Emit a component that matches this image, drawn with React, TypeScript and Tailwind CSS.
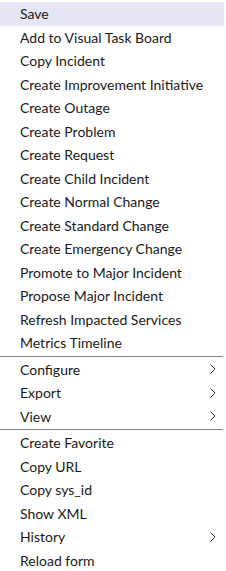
import React from "react";

type Item = { label: string; sub?: boolean };

const groups: Item[][] = [
  [
    { label: "Save" },
    { label: "Add to Visual Task Board" },
    { label: "Copy Incident" },
    { label: "Create Improvement Initiative" },
    { label: "Create Outage" },
    { label: "Create Problem" },
    { label: "Create Request" },
    { label: "Create Child Incident" },
    { label: "Create Normal Change" },
    { label: "Create Standard Change" },
    { label: "Create Emergency Change" },
    { label: "Promote to Major Incident" },
    { label: "Propose Major Incident" },
    { label: "Refresh Impacted Services" },
    { label: "Metrics Timeline" },
  ],
  [
    { label: "Configure", sub: true },
    { label: "Export", sub: true },
    { label: "View", sub: true },
  ],
  [
    { label: "Create Favorite" },
    { label: "Copy URL" },
    { label: "Copy sys_id" },
    { label: "Show XML" },
    { label: "History", sub: true },
    { label: "Reload form" },
  ],
];

const Chevron = () => (
  <svg width="8" height="12" viewBox="0 0 8 12" className="text-[#3a3a3a]">
    <path d="M1.5 1.5 L6 6 L1.5 10.5" fill="none" stroke="currentColor" strokeWidth="1" />
  </svg>
);

export default function App() {
  return (
    <div
      className="w-[226px] h-[571px] bg-white overflow-hidden pt-[2px] text-[14px] text-[#1a1a1a]"
      style={{ fontFamily: "Lato, 'Liberation Sans', sans-serif" }}
    >
      {groups.map((group, gi) => (
        <div key={gi} className={gi > 0 ? "border-t border-[#8a8a8a] mt-[1px] pt-[1px] mr-[3px]" : ""}>
          {group.map((item, i) => (
            <div
              key={item.label}
              className={`h-[23.5px] flex items-center justify-between pl-[20px] pr-[6px] ${
                gi === 0 && i === 0 ? "bg-[#e6e6f4] mr-[2px]" : ""
              }`}
            >
              <span>{item.label}</span>
              {item.sub && <Chevron />}
            </div>
          ))}
        </div>
      ))}
    </div>
  );
}
